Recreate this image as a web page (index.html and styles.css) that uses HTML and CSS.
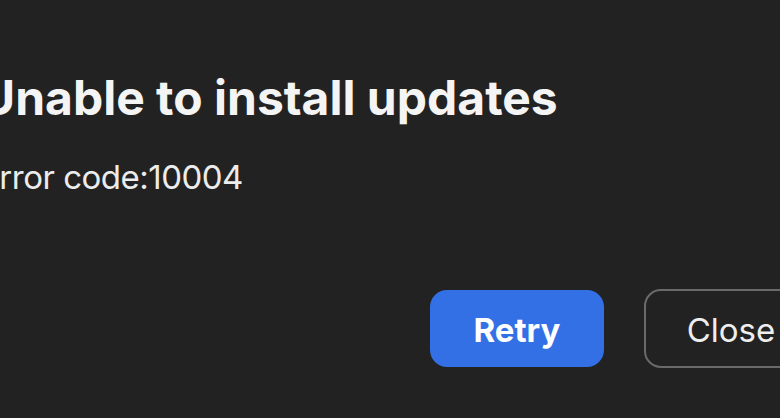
FILE: index.html
```html
<!DOCTYPE html>
<html lang="en">
<head>
<meta charset="utf-8">
<title>Unable to install updates</title>
<link rel="stylesheet" href="styles.css">
</head>
<body>
<div class="dialog">
  <h1 class="title">Unable to install updates</h1>
  <p class="message">Error code:10004</p>
  <div class="actions">
    <button class="btn btn-primary">Retry</button>
    <button class="btn btn-secondary">Close</button>
  </div>
</div>
</body>
</html>
```
FILE: styles.css
```css
html, body {
  margin: 0;
  padding: 0;
  background: #222222;
  width: 780px;
  height: 418px;
  overflow: hidden;
}

.dialog {
  display: flex;
  flex-direction: column;
  margin-left: -20px;
  padding-top: 70px;
  font-family: Inter, "Noto Sans", sans-serif;
}

.title {
  margin: 0;
  font-size: 48px;
  line-height: 56px;
  font-weight: 700;
  letter-spacing: 0;
  color: #f4f4f4;
  white-space: nowrap;
}

.message {
  margin: 31px 0 0;
  font-size: 33px;
  line-height: 40px;
  font-weight: 400;
  letter-spacing: -0.5px;
  color: #ececec;
  white-space: nowrap;
}

.actions {
  display: flex;
  gap: 40px;
  margin-top: 92px;
  padding-left: 450px;
  align-items: center;
}

.btn {
  flex: none;
  height: 77px;
  border-radius: 17px;
  font-family: Inter, "Noto Sans", sans-serif;
  font-size: 33px;
  padding: 3px 0 0;
  box-sizing: border-box;
  cursor: pointer;
}

.btn-primary {
  width: 174px;
  background: #3370e5;
  border: none;
  color: #ffffff;
  font-weight: 700;
}

.btn-secondary {
  width: 174px;
  height: 79px;
  background: transparent;
  border: 2px solid #6a6a6a;
  color: #eeeeee;
  font-weight: 400;
}
```
